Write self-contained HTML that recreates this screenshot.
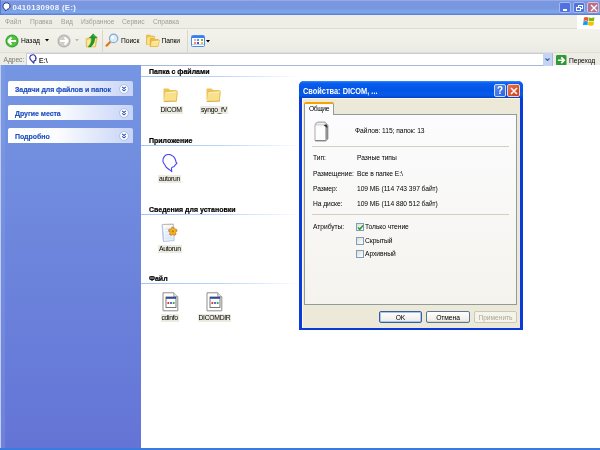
<!DOCTYPE html>
<html><head><meta charset="utf-8">
<style>
*{margin:0;padding:0;box-sizing:border-box}
html,body{width:600px;height:450px;overflow:hidden;background:#fff;font-family:"Liberation Sans",sans-serif;position:relative}
.a{position:absolute;white-space:nowrap}
.t{position:absolute;white-space:nowrap;font-size:6.7px;line-height:8px;color:#000;letter-spacing:-0.05px}
#title{left:0;top:0;width:600px;height:15px;background:linear-gradient(#9db5ef 0,#7b97e0 1.5px,#7a96df 8px,#7aa4e6 11px,#7aa8e8 13px,#5f80e0 14px,#5f80e0 15px)}
#menu{left:0;top:15px;width:600px;height:14px;background:#efeee6;border-bottom:1px solid #dedbcc}
#tb{left:0;top:29px;width:600px;height:23px;background:linear-gradient(#f3f2ec,#ecebe3)}
#addr{left:0;top:52px;width:600px;height:13px;background:#eeede5;border-top:1px solid #e2e0d4}
#left{left:0;top:65px;width:141px;height:384px;background:linear-gradient(#7596e2,#6474d6)}
#bottom{left:0;top:448px;width:600px;height:2px;background:#3a7be0}
.box{position:absolute;left:8px;width:125px;height:15px;background:linear-gradient(90deg,#fff 0,#fbfcff 40%,#c7d4f7 100%);border-radius:2px 2px 0 0}
.box span{position:absolute;left:7px;top:4px;font-size:7px;line-height:9px;font-weight:bold;color:#2050c0;letter-spacing:-0.05px;-webkit-text-stroke:0.15px #2050c0}
.chev{position:absolute;left:110.5px;top:2.5px}
.gh{position:absolute;font-size:7px;line-height:9px;font-weight:bold;color:#000;-webkit-text-stroke:0.2px #000;letter-spacing:0px}
.gl{position:absolute;left:141px;width:165px;height:1px;background:linear-gradient(90deg,#a0c4f6,#bcd6fa 50%,#eef4fe 85%,#fff)}
.lbl{position:absolute;font-size:6.8px;line-height:8px;color:#000;background:#ecebdf;padding:0 1px;letter-spacing:-0.3px}
.ic{position:absolute}
body>*{filter:blur(0.3px)}
</style></head><body>
<div id="title" class="a">
  <div class="a" style="left:0;top:0;width:1px;height:15px;background:#5a78d8"></div>
  <svg class="a" style="left:1.6px;top:1.8px" width="9" height="10" viewBox="0 0 9 10"><path d="M4.5 0.8C2.3 0.8 1 2.3 1 4.2c0 1.6 1 2.7 1.9 3.2L3.6 9l1.5-1.6c1.8-.5 2.9-1.7 2.9-3.4 0-1.9-1.5-3.2-3.5-3.2z" fill="#fff" stroke="#22308a" stroke-width="1"/></svg>
  <div class="a" style="left:12.5px;top:4px;font-size:7.8px;line-height:8px;font-weight:bold;color:#f2f5fd;letter-spacing:0.35px">0410130908 (E:)</div>
  <div class="a" style="left:559px;top:2px;width:12px;height:11px;border-radius:2px;background:#4f72e0;border:1px solid #a6baf0"><div class="a" style="left:3px;top:6px;width:4px;height:2px;background:#fff"></div></div>
  <div class="a" style="left:573px;top:2px;width:12px;height:11px;border-radius:2px;background:#4f72e0;border:1px solid #a6baf0"><div class="a" style="left:4px;top:1.5px;width:5px;height:4px;border:1px solid #fff;border-top-width:1.5px"></div><div class="a" style="left:2px;top:3.5px;width:5px;height:4px;border:1px solid #fff;border-top-width:1.5px;background:#4f72e0"></div></div>
  <div class="a" style="left:587px;top:2px;width:12px;height:11px;border-radius:2px;background:#b5708c;border:1px solid #dcc0d0"><svg class="a" style="left:1.5px;top:1px" width="8" height="8" viewBox="0 0 8 8"><path d="M1 1L7 7M7 1L1 7" stroke="#fff" stroke-width="1.4"/></svg></div>
</div>
<div id="menu" class="a">
  <div class="t" style="left:5px;top:3px;color:#9f9e98">Файл</div>
  <div class="t" style="left:30px;top:3px;color:#9f9e98">Правка</div>
  <div class="t" style="left:61px;top:3px;color:#9f9e98">Вид</div>
  <div class="t" style="left:81px;top:3px;color:#9f9e98">Избранное</div>
  <div class="t" style="left:122px;top:3px;color:#9f9e98">Сервис</div>
  <div class="t" style="left:153px;top:3px;color:#9f9e98">Справка</div>
  <div class="a" style="left:577px;top:0;width:23px;height:14px;background:#fff"></div>
  <svg class="a" style="left:583px;top:1px" width="12" height="11" viewBox="0 0 12 11"><path d="M1 1.5Q3 0.5 5.5 1.5L5 5Q3 4 0.5 5z" fill="#f05a28"/><path d="M6 1.6Q8.5 2.5 11.5 1.2L11 4.8Q8.5 5.8 5.6 5z" fill="#7cbb00"/><path d="M0.4 5.6Q3 4.6 4.9 5.6L4.5 9.3Q2.5 8.4 0 9.3z" fill="#00a1f1"/><path d="M5.5 5.7Q8.4 6.5 11 5.5L10.5 9.3Q8 10.2 5 9.3z" fill="#ffbb00"/></svg>
</div>
<div id="tb" class="a">
  <svg class="a" style="left:5px;top:4.5px" width="14" height="14" viewBox="0 0 15 15"><circle cx="7.5" cy="7.5" r="7" fill="#3aa63a"/><circle cx="7.5" cy="7.5" r="5.6" fill="#56c23e"/><path d="M3.2 7.5L7 3.8M3.2 7.5L7 11.2M3.4 7.5H11.8" stroke="#fff" stroke-width="2.1" fill="none"/></svg>
  <div class="t" style="left:21px;top:8px">Назад</div>
  <svg class="a" style="left:45px;top:10px" width="4" height="3"><path d="M0 0H4L2 2.5z" fill="#000"/></svg>
  <svg class="a" style="left:56.5px;top:4.5px" width="14" height="14" viewBox="0 0 15 15"><circle cx="7.5" cy="7.5" r="7" fill="#b5b5b0"/><circle cx="7.5" cy="7.5" r="5.6" fill="#cfcfca"/><path d="M11.8 7.5L8 3.8M11.8 7.5L8 11.2M11.6 7.5H3.2" stroke="#fff" stroke-width="2.1" fill="none"/></svg>
  <svg class="a" style="left:75px;top:10px" width="4" height="3"><path d="M0 0H4L2 2.5z" fill="#bbb"/></svg>
  <svg class="a" style="left:85px;top:4px" width="13" height="15" viewBox="0 0 13 15"><path d="M1.2 5.8L4.5 4.6 11.6 3.6 12.2 5.4 10.4 13.8 1.4 14z" fill="#f2d468" stroke="#d8aa38" stroke-width="0.6"/><path d="M2.2 7L10.8 5.6 9.6 13.2 2.2 13.4z" fill="#fbeaa0"/><path d="M8.2 0.8L12 4.9H9.9Q9.8 10.2 5.8 13.9H3.2Q6.8 10 6.5 4.9H4.4z" fill="#1f9a2a" stroke="#137a1c" stroke-width="0.4"/><path d="M8.2 1.8L10.4 4.2" stroke="#6cd070" stroke-width="0.7"/></svg>
  <div class="a" style="left:101.5px;top:1px;width:1px;height:22px;background:#d9d7cb"></div>
  <svg class="a" style="left:105px;top:4px" width="14" height="14" viewBox="0 0 14 14"><path d="M1.6 12.6L5.2 9" stroke="#e07a20" stroke-width="2.2" stroke-linecap="round"/><circle cx="8.6" cy="5.4" r="4.2" fill="#d6eefa" stroke="#86aad0" stroke-width="1.2"/><circle cx="7.6" cy="4.4" r="1.6" fill="#fff"/></svg>
  <div class="t" style="left:121px;top:8px">Поиск</div>
  <svg class="a" style="left:146px;top:5px" width="14" height="13" viewBox="0 0 14 13"><path d="M0.6 1.2H4.2L5.2 2.2H8.4V10.6H0.6z" fill="#f0c844" stroke="#d89a30" stroke-width="0.6"/><path d="M1.2 3.6L8.6 2.8 8 10.4 1 10.8z" fill="#fae280"/><path d="M4.6 4.4H8.2L9.2 5.4H12.2L11.6 12.4H4.2z" fill="#eec040" stroke="#d89a30" stroke-width="0.6"/><path d="M5.2 7.2L13.6 6.2 12 12.6 4.2 12.6z" fill="#fbe48a" stroke="#e0a838" stroke-width="0.5"/><path d="M6 8L12.6 7.2" stroke="#fff4c8" stroke-width="0.8"/></svg>
  <div class="t" style="left:161.5px;top:8px">Папки</div>
  <div class="a" style="left:186.5px;top:1px;width:1px;height:22px;background:#d9d7cb"></div>
  <div class="a" style="left:190.5px;top:5.5px;width:14.5px;height:12px;border:1px solid #4a8ae8;border-radius:1.5px;background:#fff"><div class="a" style="left:0;top:0;width:12.5px;height:2px;background:#3a80e8"></div><div class="a" style="left:0;top:8.5px;width:12.5px;height:1px;background:#b8d4f8"></div>
  <div class="a" style="left:2px;top:3px;width:2px;height:2px;border-radius:1px;background:#a898e0"></div><div class="a" style="left:5.5px;top:3px;width:2px;height:2px;border-radius:1px;background:#2070e0"></div><div class="a" style="left:9px;top:3px;width:2px;height:2px;border-radius:1px;background:#20a030"></div>
  <div class="a" style="left:2px;top:6px;width:2px;height:2px;border-radius:1px;background:#f06030"></div><div class="a" style="left:5.5px;top:6px;width:2px;height:2px;border-radius:1px;background:#182080"></div><div class="a" style="left:9px;top:6px;width:2px;height:2px;border-radius:1px;background:#e0a020"></div></div>
  <svg class="a" style="left:205.5px;top:10.5px" width="4" height="3"><path d="M0 0H4L2 2.5z" fill="#000"/></svg>
</div>
<div id="addr" class="a">
  <div class="t" style="left:3.5px;top:3px;color:#7b7a72">Адрес:</div>
  <div class="a" style="left:26px;top:-0.5px;width:527px;height:13.5px;background:#fff;border:1px solid #c4cde0;border-bottom-color:#a8b6d8;border-right-color:#a9b8e0"></div>
  <svg class="a" style="left:29px;top:1px" width="8" height="10" viewBox="0 0 8 10"><path d="M2.2 1.2C3.5 0.4 5.4 0.6 6.2 2L7.2 4.2 6.6 4.6 6.8 6.2 5.2 6.6 4.8 9.2 2.4 6.6C1 5.4 0.6 3.4 1.2 2.2z" fill="none" stroke="#2c2cb0" stroke-width="1.15" stroke-linejoin="round"/></svg>
  <div class="t" style="left:39px;top:4px;letter-spacing:0.2px;color:#000;-webkit-text-stroke:0.15px #000">E:\</div>
  <div class="a" style="left:543px;top:0;width:9px;height:12.5px;background:#c5d4f6;border-radius:1px"><svg class="a" style="left:2px;top:5px" width="5" height="4"><path d="M0.5 0.5L2.5 2.5L4.5 0.5" stroke="#4d6185" stroke-width="1.2" fill="none"/></svg></div>
  <svg class="a" style="left:556px;top:1.5px" width="10.5" height="10.5" viewBox="0 0 11 11"><rect x="0" y="0" width="11" height="11" rx="1.5" fill="#2f9a35"/><path d="M2 5.5H8M5.5 2.5L8.5 5.5L5.5 8.5" stroke="#fff" stroke-width="1.8" fill="none"/></svg>
  <div class="t" style="left:569px;top:4px">Переход</div>
</div>
<div id="left" class="a">
  <div class="a" style="left:0;top:0;width:1px;height:384px;background:#c4cdf0"></div>
  <div class="a" style="left:1px;top:0;width:4px;height:384px;background:rgba(140,170,240,0.25)"></div>
  <div class="box" style="top:16px"><span>Задачи для файлов и папок</span><svg class="chev" width="10" height="10" viewBox="0 0 10 10"><circle cx="5" cy="5" r="4.4" fill="#fff" stroke="#aab8e2" stroke-width="0.9"/><path d="M3.1 2.9L5 4.5L6.9 2.9M3.1 5.3L5 6.9L6.9 5.3" stroke="#2a58c8" stroke-width="1.1" fill="none"/></svg></div>
  <div class="box" style="top:40px"><span>Другие места</span><svg class="chev" width="10" height="10" viewBox="0 0 10 10"><circle cx="5" cy="5" r="4.4" fill="#fff" stroke="#aab8e2" stroke-width="0.9"/><path d="M3.1 2.9L5 4.5L6.9 2.9M3.1 5.3L5 6.9L6.9 5.3" stroke="#2a58c8" stroke-width="1.1" fill="none"/></svg></div>
  <div class="box" style="top:63px"><span>Подробно</span><svg class="chev" width="10" height="10" viewBox="0 0 10 10"><circle cx="5" cy="5" r="4.4" fill="#fff" stroke="#aab8e2" stroke-width="0.9"/><path d="M3.1 2.9L5 4.5L6.9 2.9M3.1 5.3L5 6.9L6.9 5.3" stroke="#2a58c8" stroke-width="1.1" fill="none"/></svg></div>
</div>
<div id="bottom" class="a"></div>

<!-- main content -->
<div class="gh" style="left:149px;top:67px">Папка с файлами</div>
<div class="gl" style="top:76px"></div>
<div class="gh" style="left:149px;top:136px">Приложение</div>
<div class="gl" style="top:145px"></div>
<div class="gh" style="left:149px;top:205px">Сведения для установки</div>
<div class="gl" style="top:214px"></div>
<div class="gh" style="left:149px;top:274px">Файл</div>
<div class="gl" style="top:283px"></div>

<!-- folder icons -->
<svg class="ic" style="left:162.5px;top:87.5px" width="15" height="14" viewBox="0 0 15 14"><path d="M0.5 1.2Q0.5 0.5 1.2 0.5H5.5L7 2H13.2Q14 2 14 2.8V12.5H0.5z" fill="#ecc355"/><path d="M2.2 4.2L14.6 3 13.6 13.2 0.8 13.6z" fill="#f9e08a"/><path d="M2.8 5L13.8 4" stroke="#fdf0c0" stroke-width="1"/><path d="M0.8 13.5L13.6 13.1" stroke="#d6a532" stroke-width="0.9"/><path d="M14.3 3.2L13.4 13.2" stroke="#e2b545" stroke-width="0.8"/></svg>
<svg class="ic" style="left:206px;top:87.5px" width="15" height="14" viewBox="0 0 15 14"><path d="M0.5 1.2Q0.5 0.5 1.2 0.5H5.5L7 2H13.2Q14 2 14 2.8V12.5H0.5z" fill="#ecc355"/><path d="M2.2 4.2L14.6 3 13.6 13.2 0.8 13.6z" fill="#f9e08a"/><path d="M2.8 5L13.8 4" stroke="#fdf0c0" stroke-width="1"/><path d="M0.8 13.5L13.6 13.1" stroke="#d6a532" stroke-width="0.9"/><path d="M14.3 3.2L13.4 13.2" stroke="#e2b545" stroke-width="0.8"/></svg>
<!-- autorun head -->
<svg class="ic" style="left:162px;top:153.5px" width="16" height="19" viewBox="0 0 16 19"><path d="M2.6 2.1Q4 0.8 5.8 0.5 7.5 0.3 9 0.9 10.6 1.6 11.8 2.9 12.8 4 13.4 5.7L14.2 8.5 15 9.3 14 10.1 13 11.3 12.2 12.5 10.2 13.3 9.4 14.1 9.8 17.7 7.4 15.7 4.2 13.3 2.6 10.5Q1.4 9 1 7.3 0.8 5.4 1.4 4.1z" fill="none" stroke="#4646f4" stroke-width="1.1" stroke-linejoin="round"/></svg>
<!-- setup Autorun -->
<svg class="ic" style="left:161px;top:223px" width="18" height="20" viewBox="0 0 18 20"><defs><linearGradient id="pg" x1="0" y1="0" x2="1" y2="1"><stop offset="0" stop-color="#ffffff"/><stop offset="1" stop-color="#d8e8f8"/></linearGradient></defs><path d="M1 1.6L12.6 1.1 13.2 17.6 2.4 18.6z" fill="url(#pg)" stroke="#a4b6dc" stroke-width="0.7"/><path d="M1.4 2L2.6 18.4" stroke="#b8c4e8" stroke-width="1.1"/><path d="M2.5 1.4H12.4" stroke="#c8a858" stroke-width="1.3" stroke-dasharray="1 1.1"/><path d="M4 6L9 5.8M4 9L8 8.9M4 12L10 11.8M4 15L10 14.8" stroke="#cfe0f4" stroke-width="0.9"/><g fill="#eea820" stroke="#b86a08" stroke-width="0.6"><circle cx="11.80" cy="5.50" r="1.5"/><circle cx="14.56" cy="7.50" r="1.5"/><circle cx="13.50" cy="10.75" r="1.5"/><circle cx="10.10" cy="10.75" r="1.5"/><circle cx="9.04" cy="7.50" r="1.5"/></g><circle cx="11.8" cy="8.4" r="2.6" fill="#f2b426"/><circle cx="11.8" cy="8.4" r="1.1" fill="#c87808"/></svg>
<!-- cdinfo/DICOMDIR -->
<svg class="ic" style="left:161.5px;top:292px" width="17" height="20" viewBox="0 0 17 20"><path d="M1 0.8H11.8L15.8 4.8V18.8H1z" fill="#fff" stroke="#8e8e8e" stroke-width="1"/><path d="M11.8 0.8V4.8H15.8" fill="#e8e8e8" stroke="#8e8e8e" stroke-width="0.8"/><rect x="4" y="5" width="10" height="10.5" fill="#fff" stroke="#6a6a6a" stroke-width="0.9"/><rect x="4" y="5" width="10" height="1.8" fill="#2d46a8"/><circle cx="6.3" cy="11" r="1.1" fill="#e02828"/><circle cx="9" cy="11" r="1.1" fill="#3050e0"/><circle cx="11.7" cy="11" r="1.1" fill="#20a040"/></svg>
<svg class="ic" style="left:205.5px;top:292px" width="17" height="20" viewBox="0 0 17 20"><path d="M1 0.8H11.8L15.8 4.8V18.8H1z" fill="#fff" stroke="#8e8e8e" stroke-width="1"/><path d="M11.8 0.8V4.8H15.8" fill="#e8e8e8" stroke="#8e8e8e" stroke-width="0.8"/><rect x="4" y="5" width="10" height="10.5" fill="#fff" stroke="#6a6a6a" stroke-width="0.9"/><rect x="4" y="5" width="10" height="1.8" fill="#2d46a8"/><circle cx="6.3" cy="11" r="1.1" fill="#e02828"/><circle cx="9" cy="11" r="1.1" fill="#3050e0"/><circle cx="11.7" cy="11" r="1.1" fill="#20a040"/></svg>

<div class="lbl" style="left:159.5px;top:105.5px">DICOM</div>
<div class="lbl" style="left:200px;top:105.5px">syngo_fV</div>
<div class="lbl" style="left:158px;top:175px">autorun</div>
<div class="lbl" style="left:158px;top:244.5px">Autorun</div>
<div class="lbl" style="left:160.5px;top:313.5px">cdinfo</div>
<div class="lbl" style="left:197.5px;top:313.5px">DICOMDIR</div>

<!-- dialog -->
<div id="dlg" class="a" style="left:299px;top:81px;width:224px;height:249px;background:#0a3ad8;border-radius:5px 5px 0 0">
  <div class="a" style="left:0;top:0;width:224px;height:17px;border-radius:5px 5px 0 0;background:linear-gradient(#3a8cff 0,#0a5ef0 2px,#0054e6 9px,#0a5ae8 14px,#0040d0 17px)"></div>
  <div class="a" style="left:4px;top:5.7px;font-size:8.8px;line-height:9px;font-weight:bold;color:#fff;transform:scaleX(0.84);transform-origin:0 0">Свойства: DICOM, ...</div>
  <div class="a" style="left:195px;top:3px;width:12px;height:13px;border-radius:2px;background:linear-gradient(135deg,#5a8cf0,#2d62de);border:1px solid #d0dcf8"><div class="a" style="left:2px;top:0;font-size:10px;line-height:11px;font-weight:bold;color:#fff">?</div></div>
  <div class="a" style="left:208px;top:3px;width:13px;height:13px;border-radius:2px;background:linear-gradient(135deg,#e8704e,#c8421e);border:1px solid #f4d0c0"><svg class="a" style="left:2px;top:2px" width="8" height="8" viewBox="0 0 8 8"><path d="M1 1L7 7M7 1L1 7" stroke="#fff" stroke-width="1.5"/></svg></div>
  <div class="a" style="left:3px;top:17px;width:218px;height:230px;background:#ece9d8;border-left:1px solid #fffbe8;border-top:1px solid #fff6dc"></div>
  <!-- tab panel -->
  <div class="a" style="left:5px;top:33px;width:213px;height:191px;background:linear-gradient(#fcfcfe,#f4f3ee);border:1px solid #919b9c"></div>
  <div class="a" style="left:5px;top:21px;width:30px;height:13px;background:#fcfcfe;border:1px solid #919b9c;border-bottom:none;border-top:2px solid #f6a200;border-radius:2px 2px 0 0"></div>
  <div class="t" style="left:10px;top:24px;letter-spacing:-0.4px">Общие</div>
  <svg class="a" style="left:15px;top:40px" width="15" height="21" viewBox="0 0 15 21"><defs><linearGradient id="fg" x1="0" x2="1"><stop offset="0" stop-color="#bdbdbd"/><stop offset="1" stop-color="#6e6e6e"/></linearGradient></defs><path d="M1 4.2Q1.4 1.4 4.2 1H11L14 4.2V18L12 20H2Q1 20 1 19z" fill="#d8d8d8" stroke="#8a8a8a" stroke-width="0.7"/><path d="M1.6 4.6H11.2V19.6H1.6z" fill="#fdfdfd"/><path d="M11.2 4.4L13.7 4.4V17.8L11.2 19.6z" fill="url(#fg)"/><path d="M1.2 19.6H11.6" stroke="#6a6a6a" stroke-width="0.9"/><path d="M9.6 4.2L12.6 3.2 13.4 7z" fill="#2e2e2e"/><path d="M3 2.6H10.4" stroke="#f4f4f4" stroke-width="0.9"/></svg>
  <div class="t" style="left:56px;top:46px">Файлов: 115; папок: 13</div>
  <div class="a" style="left:13px;top:65px;width:197px;height:1px;background:#d0d0bf"></div>
  <div class="t" style="left:14px;top:73px">Тип:</div>
  <div class="t" style="left:58px;top:73px">Разные типы</div>
  <div class="t" style="left:14px;top:88.5px">Размещение:</div>
  <div class="t" style="left:58px;top:88.5px">Все в папке E:\</div>
  <div class="t" style="left:14px;top:104px">Размер:</div>
  <div class="t" style="left:58px;top:104px">109 МБ (114 743 397 байт)</div>
  <div class="t" style="left:14px;top:118.8px">На диске:</div>
  <div class="t" style="left:58px;top:118.8px">109 МБ (114 880 512 байт)</div>
  <div class="a" style="left:13px;top:133px;width:197px;height:1px;background:#d0d0bf"></div>
  <div class="t" style="left:14px;top:141.5px">Атрибуты:</div>
  <div class="a" style="left:56.5px;top:141.5px;width:8.5px;height:8.5px;border:1px solid #7f9db9;background:linear-gradient(135deg,#dcdcd7,#fff)"><svg class="a" style="left:0;top:0" width="7" height="7" viewBox="0 0 7 7"><path d="M1 3.5L2.8 5.3L6 1.5" stroke="#21a121" stroke-width="1.5" fill="none"/></svg></div>
  <div class="t" style="left:66px;top:141.5px">Только чтение</div>
  <div class="a" style="left:56.5px;top:155.5px;width:8.5px;height:8.5px;border:1px solid #7f9db9;background:linear-gradient(135deg,#dcdcd7,#fff)"></div>
  <div class="t" style="left:66px;top:155.5px">Скрытый</div>
  <div class="a" style="left:56.5px;top:168.5px;width:8.5px;height:8.5px;border:1px solid #7f9db9;background:linear-gradient(135deg,#dcdcd7,#fff)"></div>
  <div class="t" style="left:66px;top:169px">Архивный</div>
  <!-- buttons -->
  <div class="a" style="left:80px;top:230px;width:43px;height:12px;border:1px solid #3a5f98;border-radius:2px;background:linear-gradient(#fff,#ecebe6);box-shadow:inset 0 0 0 1px #a8c4f0"><div class="t" style="left:0;width:41px;text-align:center;top:1.5px">OK</div></div>
  <div class="a" style="left:127px;top:230px;width:44px;height:12px;border:1px solid #5a7896;box-shadow:inset 0 -1px 0 #d8d4c8;border-radius:2px;background:linear-gradient(#fff,#ecebe6)"><div class="t" style="left:0;width:42px;text-align:center;top:1.5px">Отмена</div></div>
  <div class="a" style="left:175px;top:230px;width:43px;height:12px;border:1px solid #cac8bb;border-radius:2px;background:#f5f4ea"><div class="t" style="left:0;width:41px;text-align:center;top:1.5px;color:#aca899">Применить</div></div>
</div>
</body></html>
